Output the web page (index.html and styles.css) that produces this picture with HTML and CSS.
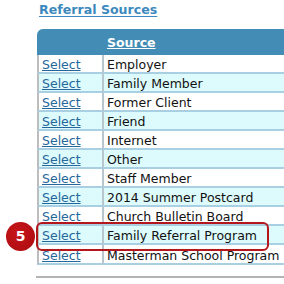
FILE: index.html
```html
<!DOCTYPE html>
<html>
<head>
<meta charset="utf-8">
<link rel="stylesheet" href="styles.css">
</head>
<body>
<div class="page">
  <h2 class="title"><a href="#">Referral Sources</a></h2>
  <div class="grid-wrap">
    <table class="grid">
      <thead>
        <tr><th class="col-sel"></th><th class="col-src"><a href="#">Source</a></th></tr>
      </thead>
      <tbody>
        <tr><td><a href="#">Select</a></td><td>Employer</td></tr>
        <tr class="alt"><td><a href="#">Select</a></td><td>Family Member</td></tr>
        <tr><td><a href="#">Select</a></td><td>Former Client</td></tr>
        <tr class="alt"><td><a href="#">Select</a></td><td>Friend</td></tr>
        <tr><td><a href="#">Select</a></td><td>Internet</td></tr>
        <tr class="alt"><td><a href="#">Select</a></td><td>Other</td></tr>
        <tr><td><a href="#">Select</a></td><td>Staff Member</td></tr>
        <tr class="alt"><td><a href="#">Select</a></td><td>2014 Summer Postcard</td></tr>
        <tr><td><a href="#">Select</a></td><td>Church Bulletin Board</td></tr>
        <tr class="alt marked"><td><a href="#">Select</a></td><td>Family Referral Program</td></tr>
        <tr class="last"><td><a href="#">Select</a></td><td>Masterman School Program</td></tr>
      </tbody>
    </table>
    <div class="callout"></div>
    <div class="step">5</div>
  </div>
  <div class="rule"></div>
</div>
</body>
</html>
```

FILE: styles.css
```css
html, body {
  margin: 0;
  padding: 0;
  background: #ffffff;
  overflow: hidden;
}

.page {
  width: 284px;
  height: 284px;
  overflow: hidden;
  font-family: "DejaVu Sans", Verdana, sans-serif;
  padding-left: 37px;
  box-sizing: border-box;
}

.title {
  margin: 0;
  padding: 3px 0 0 2px;
  height: 29px;
  box-sizing: border-box;
  font-size: 12.6px;
  line-height: 14px;
  font-weight: bold;
}

.title a {
  color: #3d89bd;
  text-decoration: underline;
  text-underline-offset: 2px;
}

.grid-wrap {
  position: relative;
  width: 280px;
}

.grid {
  border-collapse: separate;
  border-spacing: 0;
  width: 300px;
  font-size: 12.5px;
  color: #111111;
}

.grid th {
  background: #428cb5;
  height: 26px;
  padding: 1px 0 0 0;
  box-sizing: border-box;
  text-align: left;
}

.grid th.col-sel {
  width: 67px;
  border-top-left-radius: 6px;
  border-left: 2px solid #428cb5;
}

.grid th a {
  color: #ffffff;
  font-weight: bold;
  font-size: 12.5px;
  padding-left: 3px;
}

.grid td {
  height: 15px;
  line-height: 15px;
  padding: 2px 0 0 3px;
  border-bottom: 2px solid #a9d0e2;
  white-space: nowrap;
}

.grid tr.last td {
  padding-top: 3px;
}

.grid td:first-child {
  border-left: 2px solid #bdbdbd;
  border-right: 2px solid #b8c6cf;
  padding-left: 3px;
}

.grid td a {
  color: #24679a;
  text-decoration: underline;
}

.grid tr.alt td {
  background: #ddfbfd;
}

.callout {
  position: absolute;
  left: -1px;
  top: 193px;
  width: 229px;
  height: 25px;
  border: 2px solid #b3171c;
  border-radius: 6px;
  pointer-events: none;
}

.step {
  position: absolute;
  left: -31px;
  top: 193px;
  width: 29px;
  height: 29px;
  border-radius: 50%;
  background: radial-gradient(circle at 40% 35%, #c8151a, #a80c10);
  color: #ffffff;
  font-family: "DejaVu Sans", Verdana, sans-serif;
  font-weight: bold;
  font-size: 14px;
  line-height: 29px;
  text-align: center;
}

.rule {
  margin-top: 11px;
  margin-left: -1px;
  height: 2px;
  background: #b4b4b4;
}
```
